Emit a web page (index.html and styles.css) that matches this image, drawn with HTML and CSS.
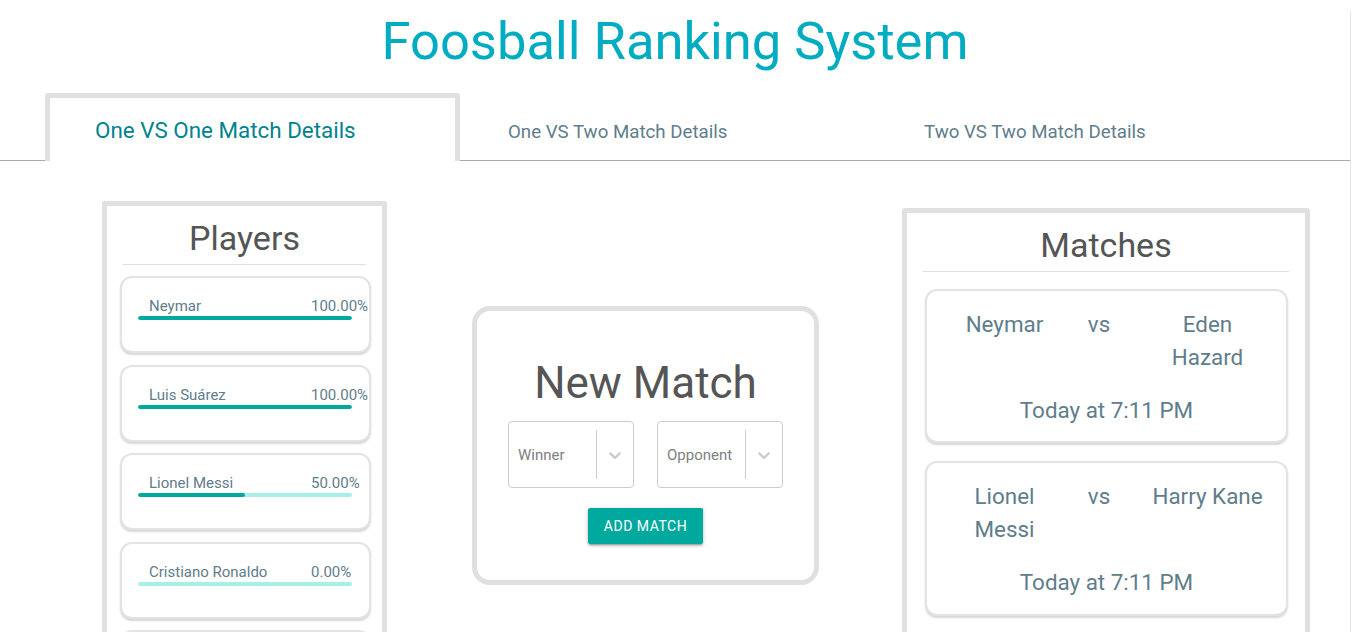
FILE: index.html
```html
<!DOCTYPE html>
<html lang="en">
<head>
<meta charset="utf-8">
<title>Foosball Ranking System</title>
<link rel="stylesheet" href="styles.css">
</head>
<body>
<div class="app">
  <h1 class="app-title">Foosball Ranking System</h1>

  <nav class="tabs">
    <div class="tab tab-active">One VS One Match Details</div>
    <div class="tab">One VS Two Match Details</div>
    <div class="tab">Two VS Two Match Details</div>
  </nav>

  <main class="content">
    <section class="panel players">
      <h2 class="panel-title">Players</h2>
      <div class="player-list">
        <div class="player-card">
          <div class="player-row"><span class="player-name">Neymar</span><span class="player-pct">100.00%</span></div>
          <div class="bar"><div class="bar-fill" style="width:100%"></div></div>
        </div>
        <div class="player-card">
          <div class="player-row"><span class="player-name">Luis Suárez</span><span class="player-pct">100.00%</span></div>
          <div class="bar"><div class="bar-fill" style="width:100%"></div></div>
        </div>
        <div class="player-card">
          <div class="player-row"><span class="player-name">Lionel Messi</span><span class="player-pct">50.00%</span></div>
          <div class="bar"><div class="bar-fill" style="width:50%"></div></div>
        </div>
        <div class="player-card">
          <div class="player-row"><span class="player-name">Cristiano Ronaldo</span><span class="player-pct">0.00%</span></div>
          <div class="bar"><div class="bar-fill" style="width:0%"></div></div>
        </div>
        <div class="player-card player-card-empty"></div>
      </div>
    </section>

    <section class="new-match">
      <h2 class="new-match-title">New Match</h2>
      <div class="selects">
        <div class="select">
          <span class="select-value">Winner</span>
          <span class="select-sep"></span>
          <span class="select-arrow"><svg viewBox="0 0 20 20" width="20" height="20"><path d="M4.516 7.548c0.436-0.446 1.043-0.481 1.576 0l3.908 3.747 3.908-3.747c0.533-0.481 1.141-0.446 1.574 0 0.436 0.445 0.408 1.197 0 1.615-0.406 0.418-4.695 4.502-4.695 4.502-0.217 0.223-0.502 0.335-0.787 0.335s-0.57-0.112-0.789-0.335c0 0-4.287-4.084-4.695-4.502s-0.436-1.17 0-1.615z"/></svg></span>
        </div>
        <div class="select">
          <span class="select-value">Opponent</span>
          <span class="select-sep"></span>
          <span class="select-arrow"><svg viewBox="0 0 20 20" width="20" height="20"><path d="M4.516 7.548c0.436-0.446 1.043-0.481 1.576 0l3.908 3.747 3.908-3.747c0.533-0.481 1.141-0.446 1.574 0 0.436 0.445 0.408 1.197 0 1.615-0.406 0.418-4.695 4.502-4.695 4.502-0.217 0.223-0.502 0.335-0.787 0.335s-0.57-0.112-0.789-0.335c0 0-4.287-4.084-4.695-4.502s-0.436-1.17 0-1.615z"/></svg></span>
        </div>
      </div>
      <button class="btn-add" type="button">ADD MATCH</button>
    </section>

    <section class="panel matches">
      <h2 class="panel-title">Matches</h2>
      <div class="match-list">
        <div class="match-card">
          <div class="match-names">
            <span class="match-player">Neymar</span>
            <span class="match-vs">vs</span>
            <span class="match-player">Eden Hazard</span>
          </div>
          <div class="match-time">Today at 7:11 PM</div>
        </div>
        <div class="match-card">
          <div class="match-names">
            <span class="match-player">Lionel Messi</span>
            <span class="match-vs">vs</span>
            <span class="match-player">Harry Kane</span>
          </div>
          <div class="match-time">Today at 7:11 PM</div>
        </div>
      </div>
    </section>
  </main>
</div>
</body>
</html>
```

FILE: styles.css
```css
html, body {
  margin: 0;
  padding: 0;
  height: 100%;
  overflow: hidden;
  background: #fff;
}

body {
  font-family: Roboto, "Noto Sans", "Liberation Sans", sans-serif;
  color: #555;
}

.app {
  width: 1350px;
  min-height: 100%;
  border-right: 1px solid #e6e6e6;
}

.app-title {
  margin: 11px 0 0;
  font-size: 52.5px;
  line-height: 60px;
  font-weight: 400;
  text-align: center;
  color: #00acc1;
}

.tabs {
  display: flex;
  margin-top: 22px;
  border-bottom: 1px solid #aaa;
}

.tab {
  box-sizing: border-box;
  width: 416px;
  height: 67px;
  padding: 10px 0 0 48px;
  display: flex;
  align-items: center;
  font-size: 18.7px;
  color: #607d8b;
  white-space: nowrap;
}

.tab-active {
  width: 415px;
  height: 68px;
  margin: 0 0 -1px 45px;
  padding: 1px 0 0 45px;
  border: 5px solid #e0e0e0;
  border-bottom: 0;
  border-radius: 4px 4px 0 0;
  background: #fff;
  font-size: 22.4px;
  color: #00838f;
}

.content {
  display: flex;
  align-items: flex-start;
  padding-left: 102px;
}

.panel {
  box-sizing: border-box;
  border: 5px solid #e0e0e0;
  border-radius: 3px;
  background: #fff;
}

.panel-title {
  margin: 0 16px;
  padding: 10.5px 0 5.5px;
  font-size: 34px;
  line-height: 42px;
  font-weight: 400;
  text-align: center;
  color: #555;
  border-bottom: 1px solid #e0e0e0;
}

/* Players */
.players {
  width: 285px;
  margin-top: 40px;
}

.player-list {
  padding-top: 11px;
}

.player-card {
  box-sizing: border-box;
  height: 77px;
  margin: 0 11px 11.5px 13px;
  padding: 18px 17px 0 16px;
  border: 2px solid #e3e3e3;
  border-radius: 12px;
  box-shadow: 0 2px 2px rgba(0, 0, 0, 0.16);
  background: #fff;
}

.player-row {
  display: grid;
  grid-template-columns: 173px auto;
  font-size: 15px;
  line-height: 20px;
  color: #607d8b;
  white-space: nowrap;
}

.player-name {
  padding-left: 11px;
}

.bar {
  height: 4px;
  border-radius: 2px;
  background: #a7f0e7;
  overflow: hidden;
}

.bar-fill {
  height: 100%;
  border-radius: 2px;
  background: #00a99d;
}

/* New match */
.new-match {
  box-sizing: border-box;
  width: 347px;
  height: 279px;
  margin: 145px 0 0 85px;
  padding-top: 45px;
  border: 5px solid #e0e0e0;
  border-radius: 18px;
  background: #fff;
  display: flex;
  flex-direction: column;
  align-items: center;
}

.new-match-title {
  margin: 0;
  font-size: 44px;
  line-height: 54px;
  font-weight: 400;
  color: #555;
}

.selects {
  display: flex;
  gap: 23px;
  margin-top: 11px;
}

.select {
  box-sizing: border-box;
  width: 126px;
  height: 67px;
  display: flex;
  align-items: center;
  border: 1px solid #ccc;
  border-radius: 4px;
  background: #fff;
}

.select-value {
  flex: 1;
  padding-left: 9px;
  font-size: 15px;
  color: #808080;
  white-space: nowrap;
}

.select-sep {
  align-self: stretch;
  width: 1px;
  margin: 8px 0;
  background: #ccc;
}

.select-arrow {
  display: flex;
  padding: 8px;
}

.select-arrow svg {
  fill: #ccc;
}

.btn-add {
  margin-top: 20px;
  height: 36px;
  padding: 0 16px;
  border: 0;
  border-radius: 2px;
  background: #00a99d;
  color: #fff;
  font-family: Roboto, "Noto Sans", sans-serif;
  font-size: 14px;
  letter-spacing: 0.5px;
  box-shadow: 0 2px 2px 0 rgba(0, 0, 0, 0.14), 0 3px 1px -2px rgba(0, 0, 0, 0.12), 0 1px 5px 0 rgba(0, 0, 0, 0.2);
}

/* Matches */
.matches {
  width: 408px;
  margin: 47px 0 0 83px;
}

.match-list {
  padding-top: 17px;
}

.match-card {
  margin: 0 17px 18px 18px;
  padding: 16.5px 19.5px 14px;
  border: 2px solid #e3e3e3;
  border-radius: 12px;
  box-shadow: 0 2px 2px rgba(0, 0, 0, 0.16);
  background: #fff;
  font-size: 22.4px;
  line-height: 1.5;
  color: #607d8b;
}

.match-names {
  display: grid;
  grid-template-columns: 116px 87px 116px;
  text-align: center;
}

.match-vs {
  padding-right: 14px;
}

.match-time {
  margin-top: 19px;
  text-align: center;
}
```
